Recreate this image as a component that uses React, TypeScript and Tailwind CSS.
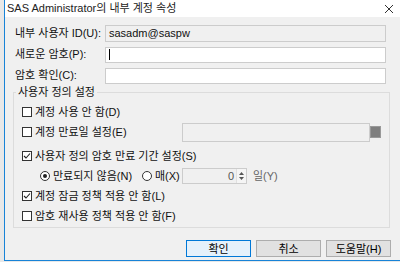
import { ReactNode } from "react";

const font = { fontFamily: '"Liberation Sans", "Noto Sans CJK KR", sans-serif' };

const CheckBox = ({ checked, label }: { checked?: boolean; label: string }) => (
    <div className="flex items-center h-[20px]">
        <span className="w-[10px] h-[10px] border border-[#333333] bg-white flex items-center justify-center">
            {checked && (
                <svg width="8" height="8" viewBox="0 0 8 8">
                    <path d="M1 4 L3 6 L7 1.5" stroke="#222" strokeWidth="1.1" fill="none" />
                </svg>
            )}
        </span>
        <span className="ml-[3px]">{label}</span>
    </div>
);

const Radio = ({ checked, label }: { checked?: boolean; label: string }) => (
    <div className="flex items-center">
        <span className="w-[10px] h-[10px] rounded-full border border-[#333333] bg-white flex items-center justify-center">
            {checked && <span className="w-[4px] h-[4px] rounded-full bg-[#222]" />}
        </span>
        <span className="ml-[3px]">{label}</span>
    </div>
);

const Field = ({ label, children }: { label: string; children: ReactNode }) => (
    <div className="flex items-center h-[17px]">
        <span className="w-[90px] shrink-0">{label}</span>
        {children}
    </div>
);

const Button = ({ label, primary }: { label: string; primary?: boolean }) => (
    <button
        className={
            primary
                ? "w-[65px] h-[17px] border border-[#0078d7] bg-[#e5f1fb] text-[11px] text-black"
                : "w-[65px] h-[17px] border border-[#adadad] bg-[#e1e1e1] text-[11px] text-black"
        }
    >
        {label}
    </button>
);

export default function App() {
    return (
        <div className="w-[400px] h-[262px] bg-[#e8e8e8] pl-[4px] overflow-hidden text-[11px] text-[#111]" style={font}>
            <div className="w-[400px] h-[261px] border-l border-b border-[#1883d7] bg-[#f0f0f0] flex flex-col">
                <div className="h-[17px] bg-white flex items-center justify-between pl-[2px] pr-[10px]">
                    <span className="text-[11px] text-[#222]">SAS Administrator의 내부 계정 속성</span>
                    <svg width="10" height="10" viewBox="0 0 10 10">
                        <path d="M1 1 L9 9 M9 1 L1 9" stroke="#333" strokeWidth="1" />
                    </svg>
                </div>

                <div className="flex flex-col pl-[10px] pr-[13px] pt-[8px]">
                    <div className="flex flex-col gap-[4px]">
                        <Field label="내부 사용자 ID(U):">
                            <div className="w-[281px] h-[17px] border border-[#cccccc] bg-[#f0f0f0] pl-[3px] flex items-center">sasadm@saspw</div>
                        </Field>
                        <Field label="새로운 암호(P):">
                            <div className="w-[281px] h-[16px] border border-[#cccccc] bg-white pl-[3px] flex items-center">
                                <span className="w-px h-[11px] bg-black" />
                            </div>
                        </Field>
                        <Field label="암호 확인(C):">
                            <div className="w-[281px] h-[16px] border border-[#cccccc] bg-white" />
                        </Field>
                    </div>

                    <fieldset className="mt-[2px] ml-[-2px] w-[377px] h-[142px] border border-[#dcdcdc] pl-[8px]">
                        <legend className="ml-[-6px] px-[2px] leading-[12px]">사용자 정의 설정</legend>
                        <div className="flex flex-col pt-[4px]">
                            <CheckBox label="계정 사용 안 함(D)" />
                            <div className="flex items-center">
                                <div className="w-[160px]">
                                    <CheckBox label="계정 만료일 설정(E)" />
                                </div>
                                <div className="w-[188px] h-[19px] border border-[#cccccc] bg-[#f0f0f0]" />
                                <div className="w-[11px] h-[12px] bg-[#7f7f7f] border border-[#999]" />
                            </div>
                            <div className="mt-[4px]">
                                <CheckBox checked label="사용자 정의 암호 만료 기간 설정(S)" />
                            </div>
                            <div className="flex items-center h-[20px] pl-[18px]">
                                <div className="w-[102px]">
                                    <Radio checked label="만료되지 않음(N)" />
                                </div>
                                <div className="w-[40px]">
                                    <Radio label="매(X)" />
                                </div>
                                <div className="w-[65px] h-[16px] border border-[#cccccc] bg-[#f0f0f0] flex items-center justify-end">
                                    <span className="pr-[2px] text-[#555]">0</span>
                                    <div className="w-[10px] h-full flex flex-col items-center justify-center border-l border-[#e0e0e0] bg-[#f5f5f5]">
                                        <svg width="5" height="3" viewBox="0 0 5 3"><path d="M0 3 L2.5 0 L5 3Z" fill="#555" /></svg>
                                        <svg width="5" height="3" viewBox="0 0 5 3" className="mt-[2px]"><path d="M0 0 L2.5 3 L5 0Z" fill="#555" /></svg>
                                    </div>
                                </div>
                                <span className="ml-[6px] text-[#666]">일(Y)</span>
                            </div>
                            <CheckBox checked label="계정 잠금 정책 적용 안 함(L)" />
                            <CheckBox label="암호 재사용 정책 적용 안 함(F)" />
                        </div>
                    </fieldset>

                    <div className="flex justify-end gap-[5px] mt-[12px] pr-[0px]">
                        <Button primary label="확인" />
                        <Button label="취소" />
                        <Button label="도움말(H)" />
                    </div>
                </div>
            </div>
        </div>
    );
}
